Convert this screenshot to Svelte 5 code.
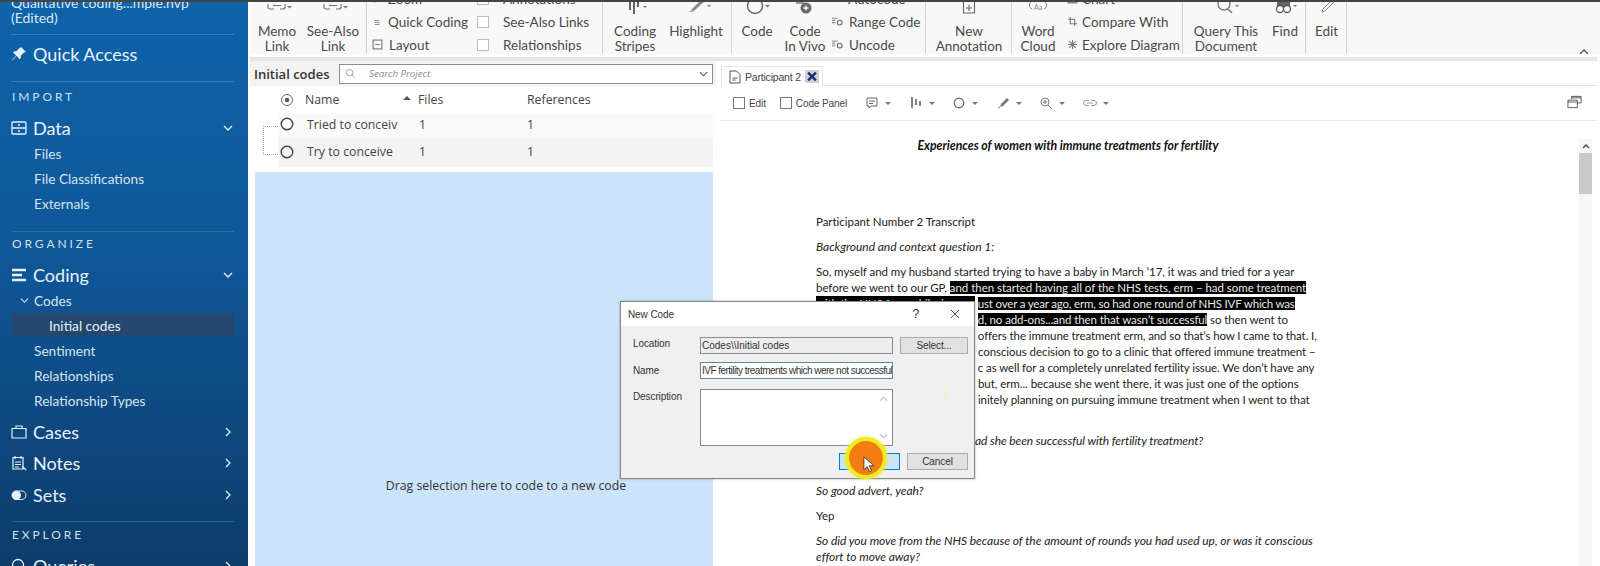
<script>
    const docLines = [
        { plain: "So, myself and my husband started trying to have a baby in March ’17, it was and tried for a year" },
        { plain: "before we went to our GP, ", mark: "and then started having all of the NHS tests, erm – had some treatment" },
        { hidden: "with the NHS for a while, j", mark: "ust over a year ago, erm, so had one round of NHS IVF which was", hiddenMark: true, ls: -0.18 },
        { hidden: "NHS IVF which was funde", mark: "d, no add-ons...and then that wasn’t successful", hiddenMark: true, plain: " so then went to", ls: -0.1 },
        { hidden: "a private clinic that", plain: "offers the immune treatment erm, and so that’s how I came to that. I,", ls: -0.1 },
        { hidden: "didn’t make a", plain: " conscious decision to go to a clinic that offered immune treatment –", ls: -0.07 },
        { hidden: "my friend was at the clini", plain: "c as well for a completely unrelated fertility issue. We don’t have any", ls: -0.1 },
        { hidden: "history of this", plain: " but, erm... because she went there, it was just one of the options", ls: -0.05 },
        { hidden: "that she had and I was def", plain: "initely planning on pursuing immune treatment when I went to that", ls: -0.08 }
    ];
</script>

<div class="app">
    <div class="topline"></div>
    <div class="shell">
        <nav class="sidebar">
            <div class="project">Qualitative coding...mple.nvp<br />(Edited)</div>
            <div class="quick">
                <svg class="nav-icon" viewBox="0 0 16 16"><path d="M10 1l5 5-2 .6-3 3-.4 2.600-1.200 1L5.500 9.800 1.500 14.500 1 14l4.200-4.500L2 6.600l1-1.200 2.600-.4 3-3z" fill="#e6f0f8" /></svg>
                Quick Access
            </div>
            <div class="label first">IMPORT</div>
            <div class="main-row tight">
                <svg class="nav-icon" viewBox="0 0 16 16"><rect x="1" y="2" width="14" height="12" rx="1" fill="none" stroke="#e6f0f8" stroke-width="1.300" /><path d="M1 8h14M7 5h2M7 11h2" stroke="#e6f0f8" stroke-width="1.300" /></svg>
                Data
                <svg class="chev" viewBox="0 0 10 10"><path d="M1 3l4 4 4-4" fill="none" stroke="#e6f0f8" stroke-width="1.300" /></svg>
            </div>
            <div class="sub">Files</div>
            <div class="sub">File Classifications</div>
            <div class="sub last">Externals</div>
            <div class="label">ORGANIZE</div>
            <div class="main-row tight">
                <svg class="nav-icon" viewBox="0 0 16 16"><path d="M1 3h14M1 8h10M1 13h14" stroke="#e6f0f8" stroke-width="2.400" /></svg>
                Coding
                <svg class="chev" viewBox="0 0 10 10"><path d="M1 3l4 4 4-4" fill="none" stroke="#e6f0f8" stroke-width="1.300" /></svg>
            </div>
            <div class="sub codes">
                <svg class="sub-chev" viewBox="0 0 10 10"><path d="M1 3l4 4 4-4" fill="none" stroke="#dbe8f2" stroke-width="1.200" /></svg>
                Codes
            </div>
            <div class="sub active"><span>Initial codes</span></div>
            <div class="sub">Sentiment</div>
            <div class="sub">Relationships</div>
            <div class="sub">Relationship Types</div>
            <div class="main-row first-closed">
                <svg class="nav-icon" viewBox="0 0 16 16"><path d="M1 4.500h14v9.500H1zM5 4.500V2h6v2.500" fill="none" stroke="#e6f0f8" stroke-width="1.200" /></svg>
                Cases
                <svg class="chev" viewBox="0 0 10 10"><path d="M3 1l4 4-4 4" fill="none" stroke="#e6f0f8" stroke-width="1.300" /></svg>
            </div>
            <div class="main-row">
                <svg class="nav-icon" viewBox="0 0 16 16"><path d="M2 2.500h10V14H2zM4 1v3M10 1v3M4 7h6M4 9.500h6M4 12h4M11 11l4 4" fill="none" stroke="#e6f0f8" stroke-width="1.200" /></svg>
                Notes
                <svg class="chev" viewBox="0 0 10 10"><path d="M3 1l4 4-4 4" fill="none" stroke="#e6f0f8" stroke-width="1.300" /></svg>
            </div>
            <div class="main-row">
                <svg class="nav-icon" viewBox="0 0 16 16"><rect x="1" y="4" width="14" height="8.500" rx="4.250" fill="none" stroke="#e6f0f8" stroke-width="1" /><circle cx="5.500" cy="8.250" r="4.500" fill="#e6f0f8" /></svg>
                Sets
                <svg class="chev" viewBox="0 0 10 10"><path d="M3 1l4 4-4 4" fill="none" stroke="#e6f0f8" stroke-width="1.300" /></svg>
            </div>
            <div class="label explore">EXPLORE</div>
            <div class="main-row">
                <svg class="nav-icon" viewBox="0 0 16 16"><circle cx="7" cy="7" r="5.500" fill="none" stroke="#e6f0f8" stroke-width="1.300" /></svg>
                Queries
                <svg class="chev" viewBox="0 0 10 10"><path d="M3 1l4 4-4 4" fill="none" stroke="#e6f0f8" stroke-width="1.300" /></svg>
            </div>
        </nav>

        <div class="content">
            <div class="ribbon">
                <div class="group g117">
                    <div class="big w54">
                        <svg class="top-icon" viewBox="0 0 30 21"><path d="M6 2v3a2 2 0 0 0 2 2h4M18 7h3a2 2 0 0 0 2-2V2M11 3.500h8" fill="none" stroke="#777" stroke-width="1.200" /><path d="M25 4h5l-2.500 2.500z" fill="#777" /></svg>
                        <span>Memo<br />Link</span>
                    </div>
                    <div class="big w58">
                        <svg class="top-icon" viewBox="0 0 30 21"><path d="M6 2v3a2 2 0 0 0 2 2h4M18 7h3a2 2 0 0 0 2-2V2M11 3.500h8" fill="none" stroke="#777" stroke-width="1.200" /><path d="M25 4h5l-2.500 2.500z" fill="#777" /></svg>
                        <span>See-Also<br />Link</span>
                    </div>
                </div>
                <div class="group g236">
                    <div class="col c110">
                        <div class="small"><i class="glyph">⌕</i>Zoom</div>
                        <div class="small"><i class="glyph">≡</i>Quick Coding</div>
                        <div class="small"><svg class="mini" viewBox="0 0 10 10"><rect x="1" y="1" width="8" height="8" fill="none" stroke="#777" /><path d="M3 5h4" stroke="#777" /></svg>Layout</div>
                    </div>
                    <div class="col">
                        <div class="small chk"><b class="box"></b>Annotations</div>
                        <div class="small chk"><b class="box"></b>See-Also Links</div>
                        <div class="small chk"><b class="box"></b>Relationships</div>
                    </div>
                </div>
                <div class="group g129">
                    <div class="big w64">
                        <svg class="top-icon" viewBox="0 0 30 21"><path d="M10 0v8M14 0v12M18 0v5" stroke="#666" stroke-width="2" /><path d="M23 4h4l-2 2z" fill="#777" /></svg>
                        <span>Coding<br />Stripes</span>
                    </div>
                    <div class="big w58">
                        <svg class="top-icon" viewBox="0 0 30 21"><path d="M21 -3l-9 9-2 2 3 1 2-2 9-8z" fill="#888" /><path d="M8 10l3-2 2 2z" fill="#aaa" /><path d="M26 3h4l-2 2z" fill="#777" /></svg>
                        <span>Highlight</span>
                    </div>
                </div>
                <div class="group g194">
                    <div class="big w50">
                        <svg class="top-icon" viewBox="0 0 30 21"><circle cx="13" cy="4" r="7.500" fill="none" stroke="#666" stroke-width="1.500" /><path d="M23 3h5l-2.500 2.500z" fill="#777" /></svg>
                        <span>Code</span>
                    </div>
                    <div class="big w46">
                        <svg class="top-icon" viewBox="0 0 30 21"><path d="M6 1h8" stroke="#999" stroke-width="2" /><circle cx="16" cy="6" r="5.500" fill="#6a6a6a" /><path d="M16 3.500v5M13.500 6h5" stroke="#fff" stroke-width="1.300" /></svg>
                        <span>Code<br />In Vivo</span>
                    </div>
                    <div class="col">
                        <div class="small"><i class="glyph">▫</i>Autocode</div>
                        <div class="small"><svg class="mini" viewBox="0 0 10 10"><path d="M0 2h5M0 4h3M0 6h3" stroke="#888" /><circle cx="7" cy="6" r="2.200" fill="none" stroke="#666" /></svg>Range Code</div>
                        <div class="small"><svg class="mini" viewBox="0 0 10 10"><path d="M0 2h5M0 4h3M0 6h3" stroke="#aaa" stroke-width="1.500" /><circle cx="7" cy="6" r="2.200" fill="none" stroke="#666" /></svg>Uncode</div>
                    </div>
                </div>
                <div class="group g86">
                    <div class="big w86">
                        <svg class="top-icon" viewBox="0 0 30 21"><path d="M9.500 0v11h11V0" fill="none" stroke="#666" stroke-width="1.100" /><path d="M15 3v6M12 6h6" stroke="#666" stroke-width="1.100" /></svg>
                        <span>New<br />Annotation</span>
                    </div>
                </div>
                <div class="group g171">
                    <div class="big w52">
                        <svg class="top-icon" viewBox="0 0 30 21"><path d="M8 0a4 4 0 0 0 1 7M22 0a4 4 0 0 1-1 7" fill="none" stroke="#888" /><text x="11" y="8" class="aa">Aa</text></svg>
                        <span>Word<br />Cloud</span>
                    </div>
                    <div class="col compare">
                        <div class="small"><svg class="mini" viewBox="0 0 10 10"><path d="M1 1h8v8H1z" fill="none" stroke="#777" /></svg>Chart</div>
                        <div class="small"><svg class="mini" viewBox="0 0 10 10"><path d="M3 1v6h6M1 3h6v6" fill="none" stroke="#777" /></svg>Compare With</div>
                        <div class="small"><svg class="mini" viewBox="0 0 10 10"><path d="M5 1v8M2 2l6 6M8 2L2 8M1 5h8" stroke="#777" /></svg>Explore Diagram</div>
                    </div>
                </div>
                <div class="group g123">
                    <div class="big w86">
                        <svg class="top-icon" viewBox="0 0 30 21"><circle cx="13" cy="2" r="6" fill="none" stroke="#777" stroke-width="1.300" /><path d="M17 7l4 4" stroke="#777" stroke-width="1.500" /><path d="M24 3h4l-2 2z" fill="#777" /></svg>
                        <span>Query This<br />Document</span>
                    </div>
                    <div class="big w32">
                        <svg class="top-icon wide" viewBox="0 0 30 21"><path d="M7 0h13v5H7z" fill="#666" /><circle cx="10" cy="7" r="3.500" fill="#fff" stroke="#555" stroke-width="1.300" /><circle cx="17" cy="7" r="3.500" fill="#fff" stroke="#555" stroke-width="1.300" /><path d="M23 3h4l-2 2z" fill="#777" /></svg>
                        <span>Find</span>
                    </div>
                </div>
                <div class="group g41">
                    <div class="big w41">
                        <svg class="top-icon" viewBox="0 0 30 21"><path d="M21 -3l2 2-10 10-3 1 1-3z" fill="none" stroke="#888" /></svg>
                        <span>Edit</span>
                    </div>
                </div>
                <svg class="collapse" viewBox="0 0 10 6"><path d="M1 5l4-4 4 4" fill="none" stroke="#555" stroke-width="1.300" /></svg>
            </div>
            <div class="band"></div>

            <div class="panes">
                <section class="left">
                    <header class="left-head">
                        <strong>Initial codes</strong>
                        <div class="search">
                            <svg class="search-icon" viewBox="0 0 12 12"><circle cx="5" cy="5" r="3.500" fill="none" stroke="#999" /><path d="M7.500 7.500l3 3" stroke="#999" /></svg>
                            <em>Search Project</em>
                            <svg class="search-chev" viewBox="0 0 10 6"><path d="M1 1l4 4 4-4" fill="none" stroke="#555" stroke-width="1.200" /></svg>
                        </div>
                    </header>
                    <div class="list-head">
                        <svg class="radio" viewBox="0 0 14 14"><circle cx="7" cy="7" r="5.500" fill="none" stroke="#666" /><circle cx="7" cy="7" r="2.300" fill="#555" /></svg>
                        <span class="name">Name</span>
                        <i class="sort"></i>
                        <span class="files">Files</span>
                        <span class="refs">References</span>
                    </div>
                    <div class="tree">
                        <div class="tree-line"></div>
                        <div class="row">
                            <svg class="radio" viewBox="0 0 14 14"><circle cx="7" cy="7" r="5.800" fill="none" stroke="#444" stroke-width="1.400" /></svg>
                            <span class="name">Tried to conceiv</span>
                            <span class="files">1</span>
                            <span class="refs">1</span>
                        </div>
                        <div class="row alt">
                            <svg class="radio" viewBox="0 0 14 14"><circle cx="7" cy="7" r="5.800" fill="none" stroke="#444" stroke-width="1.400" /></svg>
                            <span class="name">Try to conceive</span>
                            <span class="files">1</span>
                            <span class="refs">1</span>
                        </div>
                    </div>
                    <div class="drop">Drag selection here to code to a new code</div>
                </section>

                <section class="right">
                    <div class="tabs">
                        <div class="tab">
                            <svg class="tab-icon" viewBox="0 0 12 14"><path d="M1 1h6.500L11 4.500V13H1zM3.500 8h5M3.500 10h3" fill="none" stroke="#555" /></svg>
                            <span class="tab-name">Participant 2</span>
                            <span class="tab-x"><svg viewBox="0 0 10 10"><path d="M2 2l6 6M8 2l-6 6" stroke="#1b2f6b" stroke-width="1.800" /></svg></span>
                        </div>
                    </div>
                    <div class="toolbar">
                        <b class="box tool-box"></b><span class="tool-label">Edit</span>
                        <b class="box tool-box second"></b><span class="tool-label">Code Panel</span>
                        <div class="tools">
                            <div class="tool"><svg viewBox="0 0 14 14"><path d="M2 2h10v8H6l-2 2v-2H2zM4 5h6M4 7.500h4" fill="none" stroke="#666" /></svg><i></i></div>
                            <div class="tool"><svg viewBox="0 0 14 14"><path d="M3 1v11M7 3v6M11 5v5" stroke="#666" stroke-width="1.600" /></svg><i></i></div>
                            <div class="tool"><svg viewBox="0 0 14 14"><circle cx="7" cy="7" r="4.800" fill="none" stroke="#666" stroke-width="1.200" /></svg><i></i></div>
                            <div class="tool"><svg viewBox="0 0 14 14"><path d="M11 2l2 2-6 6-3 1 1-3z" fill="#777" /><path d="M2 12l2-1" stroke="#777" /></svg><i></i></div>
                            <div class="tool"><svg viewBox="0 0 14 14"><circle cx="6" cy="6" r="4" fill="none" stroke="#777" /><path d="M9 9l4 4M4 6h4M6 4v4" stroke="#777" /></svg><i></i></div>
                            <div class="tool faint"><svg viewBox="0 0 14 14"><path d="M6 4.500H3a2.500 2.500 0 0 0 0 5h3M8 4.500h3a2.500 2.500 0 0 1 0 5H8M4 7h6" fill="none" stroke="#999" /></svg><i></i></div>
                        </div>
                        <svg class="restore" viewBox="0 0 16 14"><path d="M5 4V1h10v7h-4M1 5h10v8H1zM1 7h10M5 2.500h10" fill="none" stroke="#555" /></svg>
                    </div>
                    <div class="doc">
                        <div class="page">
                            <h1>Experiences of women with immune treatments for fertility</h1>
                            <p class="transcript">Participant Number 2 Transcript</p>
                            <p><em>Background and context question 1:</em></p>
                            <p class="answer">
                                {#each docLines as line}
                                    <span class="line" style="letter-spacing: {line.ls ?? -0.04}px">
                                        {#if line.hidden}<span class="behind" class:black={line.hiddenMark}>{line.hidden}</span>{/if}
                                        {#if line.mark}
                                            {#if line.plain && !line.hidden}{line.plain}{/if}<mark>{line.mark}</mark>{#if line.plain && line.hidden}{line.plain}{/if}
                                        {:else}
                                            {line.plain}
                                        {/if}
                                    </span>
                                {/each}
                            </p>
                            <p class="question"><em><span class="behind">Did you know, h</span>ad she been successful with fertility treatment?</em></p>
                            <p>Yes</p>
                            <p><em>So good advert, yeah?</em></p>
                            <p>Yep</p>
                            <p><em>So did you move from the NHS because of the amount of rounds you had used up, or was it conscious<br />effort to move away?</em></p>
                        </div>
                        <div class="scroll">
                            <svg viewBox="0 0 10 6"><path d="M2 5l3-3 3 3" fill="none" stroke="#444" stroke-width="1.300" /></svg>
                            <div class="thumb"></div>
                        </div>
                    </div>
                </section>
            </div>
        </div>
    </div>

    <div class="dialog">
        <div class="dialog-title">
            <span>New Code</span>
            <span class="help">?</span>
            <svg class="close" viewBox="0 0 12 12"><path d="M1 1l10 10M11 1L1 11" stroke="#333" stroke-width="1" /></svg>
        </div>
        <div class="dialog-body">
            <div class="form-row loc-row">
                <label for="loc">Location</label>
                <input id="loc" class="field readonly" value={"Codes\\\\Initial codes"} readonly />
                <button class="btn select">Select...</button>
            </div>
            <div class="form-row">
                <label for="nm">Name</label>
                <input id="nm" class="field active-field" value="IVF fertility treatments which were not successful" />
            </div>
            <div class="form-row top">
                <label for="desc">Description</label>
                <div class="area" id="desc">
                    <svg class="area-up" viewBox="0 0 10 6"><path d="M1 5l4-4 4 4" fill="none" stroke="#bbb" stroke-width="1.200" /></svg>
                    <svg class="area-down" viewBox="0 0 10 6"><path d="M1 1l4 4 4-4" fill="none" stroke="#bbb" stroke-width="1.200" /></svg>
                </div>
            </div>
            <div class="dialog-actions">
                <button class="btn ok">OK</button>
                <button class="btn">Cancel</button>
            </div>
        </div>
        <i class="speck"></i>
    </div>

    <div class="pointer">
        <svg viewBox="0 0 14 20"><path d="M1 1v15l4-3.500 2.500 6 2.500-1-2.500-6H13z" fill="#fff" stroke="#333" stroke-width="1" /></svg>
    </div>
</div>

<style>
    :global(body) {
        margin: 0;
        background: #fff;
    }

    .app {
        position: relative;
        height: 566px;
        overflow: hidden;
        font-family: Lato, sans-serif;
        color: #444;
    }

    .topline {
        height: 2px;
        background: #444;
    }

    .shell {
        display: flex;
        height: 564px;
    }

    /* sidebar */
    .sidebar {
        flex: 0 0 248px;
        box-sizing: border-box;
        overflow: hidden;
        background: linear-gradient(#0e63aa, #0f5797 45%, #0d3c6b);
        color: #eaf2f9;
    }

    .project {
        margin: -7px 14px 0 11px;
        padding-bottom: 9px;
        font-size: 14px;
        line-height: 15px;
        color: #dbe8f3;
        border-bottom: 1px solid #2f7dbd;
    }

    .quick {
        box-sizing: border-box;
        display: flex;
        align-items: center;
        gap: 6px;
        height: 47px;
        margin: 0 14px 0 11px;
        padding-bottom: 8px;
        font-size: 18px;
        border-bottom: 1px solid #2f7dbd;
    }

    .label {
        margin-left: 12px;
        padding: 7px 0 10px;
        font-size: 12px;
        line-height: 16px;
        letter-spacing: 2.900px;
        color: #cfe0ee;
    }

    .label:not(.first) {
        margin: 0 14px 0 12px;
        padding: 4px 0 10px;
        border-top: 1px solid #2b6fa8;
    }

    .label.explore {
        margin-top: 10px;
        padding: 5px 0 8px;
        border-color: #2a5f90;
    }

    .main-row {
        display: flex;
        align-items: center;
        gap: 6px;
        height: 31.500px;
        padding: 0 15px 0 11px;
        font-size: 18px;
    }

    .main-row.tight {
        height: 26px;
    }

    .main-row.first-closed {
        margin-top: 3px;
    }

    .nav-icon {
        flex: none;
        width: 16px;
        height: 16px;
    }

    .chev {
        width: 10px;
        height: 10px;
        margin-left: auto;
    }

    .sub {
        position: relative;
        height: 25px;
        padding-left: 34px;
        font-size: 13.700px;
        line-height: 25px;
        color: #d6e4ef;
    }

    .sub.last {
        margin-bottom: 15px;
    }

    .sub-chev {
        position: absolute;
        left: 20px;
        top: 8px;
        width: 9px;
        height: 9px;
    }

    .sub.active {
        padding-left: 0;
    }

    .sub.active span {
        display: block;
        margin: 0 14px 2px 12px;
        height: 23px;
        padding-left: 37px;
        line-height: 25px;
        background: #24476f;
        color: #e6eff6;
    }

    /* ribbon */
    .content {
        flex: 1;
        min-width: 0;
        margin-left: 2px;
        display: flex;
        flex-direction: column;
    }

    .ribbon {
        position: relative;
        display: flex;
        flex: none;
        height: 52px;
        overflow: hidden;
        background: #f8f8f8;
        font-size: 13.500px;
        color: #4a4a4a;
    }

    .group {
        flex: none;
        box-sizing: border-box;
        display: flex;
        border-right: 1px solid #d4d4d4;
    }

    .g117 { width: 117px; }
    .g236 { width: 236px; }
    .g129 { width: 129px; }
    .g194 { width: 194px; }
    .g86 { width: 86px; }
    .g171 { width: 171px; }
    .g123 { width: 123px; }
    .g41 { width: 41px; }

    .w32 { width: 32px; }
    .w41 { width: 41px; }
    .w46 { width: 46px; }
    .w50 { width: 50px; }
    .w52 { width: 52px; }
    .w54 { width: 54px; }
    .w58 { width: 58px; }
    .w64 { width: 64px; }
    .w86 { width: 86px; }

    .big {
        flex: none;
        display: flex;
        flex-direction: column;
        align-items: center;
        text-align: center;
        line-height: 15px;
        white-space: nowrap;
    }

    .big span {
        margin-top: 1px;
    }

    .top-icon {
        display: block;
        width: 30px;
        height: 21px;
        flex: none;
    }

    .col {
        flex: none;
        margin-top: -15px;
    }

    .c110 {
        width: 110px;
    }

    .compare {
        margin-left: -1px;
    }

    .compare .mini {
        margin-right: 4px;
    }

    .small {
        display: flex;
        align-items: center;
        height: 23px;
        padding-left: 3px;
        white-space: nowrap;
    }

    .g236 .small:not(.chk) {
        padding-left: 4px;
    }

    .small.chk {
        padding-left: 0;
    }

    .glyph {
        width: 12px;
        margin-right: 5px;
        text-align: center;
        font-size: 11px;
        font-style: normal;
        color: #777;
    }

    .mini {
        width: 11px;
        height: 11px;
        margin: 0 6px 0 1px;
        flex: none;
    }

    .box {
        flex: none;
        box-sizing: border-box;
        display: block;
        width: 12px;
        height: 12px;
        background: #fff;
        border: 1px solid #bdbdbd;
    }

    .chk .box {
        margin-right: 14px;
    }

    .collapse {
        position: absolute;
        top: 47px;
        left: 1329px;
        width: 10px;
        height: 6px;
    }

    .band {
        flex: none;
        height: 4px;
        margin: 3px 3px 0 0;
        background: #e6e6e6;
    }

    .panes {
        flex: 1;
        min-height: 0;
        display: flex;
    }

    /* codes pane */
    .left {
        flex: 0 0 466px;
        display: flex;
        flex-direction: column;
    }

    .left-head {
        display: flex;
        align-items: center;
        flex: none;
        height: 25px;
        padding: 0 3px 0 4px;
        background: #f3f3f3;
    }

    .left-head strong {
        flex: none;
        width: 85px;
        font-family: "Open Sans", sans-serif;
        font-size: 13px;
        font-weight: 600;
        color: #333;
    }

    .search {
        position: relative;
        flex: 1;
        box-sizing: border-box;
        display: flex;
        align-items: center;
        height: 20px;
        background: #fff;
        border: 1px solid #8d8d8d;
        font-family: "Open Sans", sans-serif;
        font-size: 9.700px;
        color: #888;
    }

    .search-icon {
        width: 11px;
        height: 11px;
        margin: 0 13px 0 5px;
    }

    .search-chev {
        position: absolute;
        right: 4px;
        top: 6px;
        width: 9px;
        height: 6px;
    }

    .list-head,
    .row {
        position: relative;
        display: flex;
        align-items: center;
        box-sizing: border-box;
        font-family: "Open Sans", sans-serif;
        font-size: 12.300px;
        color: #444;
    }

    .list-head {
        height: 27px;
    }

    .radio {
        position: absolute;
        left: 30px;
        top: calc(50% - 7px);
        width: 14px;
        height: 14px;
    }

    .name,
    .files,
    .refs {
        position: absolute;
        white-space: nowrap;
    }

    .list-head .name { left: 55px; }
    .list-head .files { left: 168px; }
    .list-head .refs { left: 277px; }

    .sort {
        position: absolute;
        left: 153px;
        top: 10px;
        border: 4px solid transparent;
        border-top: 0;
        border-bottom: 4px solid #555;
    }

    .tree {
        position: relative;
        flex: none;
        height: 54px;
    }

    .tree-line {
        position: absolute;
        left: 13px;
        top: 13px;
        width: 16px;
        height: 27px;
        border: 1px dotted #aaa;
        border-right: 0;
    }

    .row {
        height: 25px;
        margin: 0 3px 0 28px;
        padding-bottom: 3px;
        background: #fafafa;
    }

    .row.alt {
        height: 29px;
        padding-bottom: 2px;
        background: #f4f4f4;
    }

    .row .radio {
        left: 2px;
        top: 4px;
    }

    .row.alt .radio {
        top: 7px;
    }

    .row .name { left: 29px; }
    .row .files { left: 141px; }
    .row .refs { left: 249px; }

    .drop {
        flex: 1;
        display: flex;
        align-items: center;
        justify-content: center;
        margin: 5px 3px 0 5px;
        padding: 232px 0 0 44px;
        background: #cce4fa;
        font-family: "Open Sans", sans-serif;
        font-size: 12.300px;
        color: #333;
    }

    /* document pane */
    .right {
        flex: 1;
        min-width: 0;
        margin: 0 3px 0 4px;
        display: flex;
        flex-direction: column;
    }

    .tabs {
        flex: none;
        height: 25px;
        box-sizing: border-box;
        padding-top: 5px;
        padding-left: 1px;
        border-bottom: 1px solid #e2e2e2;
    }

    .tab {
        box-sizing: border-box;
        display: flex;
        align-items: center;
        width: 102px;
        height: 20px;
        padding-left: 7px;
        border: 1px solid #e6e6e6;
        border-bottom: 0;
        font-family: "Liberation Sans", sans-serif;
        font-size: 10.500px;
        letter-spacing: -0.200px;
        color: #444;
        background: #fff;
    }

    .tab-name {
        flex: none;
        width: 60px;
        white-space: nowrap;
    }

    .tab-icon {
        flex: none;
        width: 12px;
        height: 14px;
        margin-right: 4px;
    }

    .tab-x {
        flex: none;
        display: block;
        width: 14px;
        height: 13px;
        background: #cdd0d5;
    }

    .tab-x svg {
        display: block;
        width: 14px;
        height: 13px;
    }

    .toolbar {
        position: relative;
        flex: none;
        display: flex;
        align-items: center;
        height: 35px;
        box-sizing: border-box;
        padding-left: 13px;
        border-bottom: 1px solid #e6e6e6;
        font-family: "Liberation Sans", sans-serif;
        font-size: 10px;
        letter-spacing: -0.100px;
        color: #444;
    }

    .tool-box {
        border-color: #777;
        margin-right: 4px;
    }

    .tool-box.second {
        margin-left: 14px;
    }

    .tools {
        display: flex;
        margin-left: 18px;
    }

    .tool {
        display: flex;
        align-items: center;
        gap: 6px;
        width: 43.500px;
    }

    .tool svg {
        width: 14px;
        height: 14px;
    }

    .tool i {
        border: 3px solid transparent;
        border-top: 3px solid #777;
        border-bottom: 0;
    }

    .restore {
        position: absolute;
        left: 847px;
        top: 9px;
        width: 15px;
        height: 14px;
    }

    .doc {
        position: relative;
        flex: 1;
        min-height: 0;
        overflow: hidden;
    }

    .page {
        width: 504px;
        margin-left: 96px;
        padding-top: 17px;
        font-family: Lato, sans-serif;
        font-size: 11.500px;
        line-height: 16px;
        letter-spacing: -0.040px;
        white-space: nowrap;
        color: #222;
    }

    .page h1 {
        margin: 0 0 60px;
        font-size: 12.300px;
        line-height: 16px;
        font-weight: 700;
        font-style: italic;
        text-align: center;
        color: #111;
    }

    .page p {
        margin: 0 0 9px;
    }

    .page em {
        font-size: 12px;
    }

    .line {
        display: block;
    }

    .line mark {
        background: #000;
        color: #e8e8e8;
    }

    .behind {
        display: inline-block;
        vertical-align: top;
        width: 159px;
        height: 16px;
        overflow: hidden;
    }

    .behind.black {
        background: #000;
        color: #e8e8e8;
    }

    .page p.question {
        margin-top: 25px;
        letter-spacing: -0.100px;
    }

    .scroll {
        position: absolute;
        top: 18px;
        left: 859px;
        width: 13px;
        height: 500px;
        background: #f6f6f6;
    }

    .scroll svg {
        display: block;
        width: 10px;
        height: 8px;
        margin: 3px auto;
    }

    .thumb {
        height: 41px;
        background: #c9c9c9;
    }

    /* new code dialog */
    .dialog {
        position: absolute;
        left: 620px;
        top: 301px;
        box-sizing: border-box;
        width: 355px;
        height: 178px;
        border: 1px solid #888;
        background: #f0f0f0;
        font-family: "Liberation Sans", sans-serif;
        font-size: 10px;
        letter-spacing: -0.100px;
        color: #333;
        box-shadow: 0 0 2px rgba(0, 0, 0, 0.35);
    }

    .dialog-title {
        display: flex;
        align-items: center;
        height: 24px;
        padding: 0 14px 0 7px;
        background: #fff;
    }

    .help {
        margin-left: auto;
        margin-right: 31px;
        font-size: 12px;
    }

    .close {
        width: 10px;
        height: 10px;
    }

    .dialog-body {
        padding: 11px 6px 0 12px;
    }

    .form-row {
        display: flex;
        align-items: center;
        margin-bottom: 8px;
    }

    .form-row.top {
        align-items: flex-start;
        margin-top: 10px;
        margin-bottom: 7px;
    }

    .form-row label {
        flex: none;
        width: 67px;
    }

    .form-row.loc-row label {
        margin-top: -4px;
    }

    .form-row.top label {
        margin-top: 2px;
    }

    .field {
        flex: none;
        box-sizing: border-box;
        width: 193px;
        height: 17px;
        padding: 0 0 0 1px;
        font: inherit;
        color: #333;
        outline: none;
    }

    .readonly {
        background: #eee;
        border: 1px solid #8a8a8a;
    }

    .active-field {
        background: #fff;
        border: 1px solid #5f87ad;
        letter-spacing: -0.520px;
    }

    .btn {
        box-sizing: border-box;
        width: 61px;
        height: 17px;
        padding: 0;
        border: 1px solid #adadad;
        background: #e1e1e1;
        font: inherit;
        letter-spacing: inherit;
        color: #333;
    }

    .btn.select {
        width: 69px;
        margin-left: 7px;
    }

    .area {
        position: relative;
        box-sizing: border-box;
        width: 193px;
        height: 57px;
        background: #fff;
        border: 1px solid #8a8a8a;
    }

    .area-up,
    .area-down {
        position: absolute;
        right: 4px;
        width: 9px;
        height: 6px;
    }

    .area-up { top: 6px; }
    .area-down { bottom: 6px; }

    .dialog-actions {
        display: flex;
        justify-content: flex-end;
        gap: 7px;
    }

    .btn.ok {
        background: #cce4f7;
        border-color: #0078d7;
    }

    .speck {
        position: absolute;
        left: 324px;
        top: 88px;
        width: 1px;
        height: 9px;
        background: #f2f2a0;
    }

    .pointer {
        position: absolute;
        left: 849px;
        top: 441px;
        width: 34px;
        height: 34px;
        border-radius: 50%;
        background: #f57c13;
        box-shadow: 0 0 0 4px #ecec1e, 0 0 3px 5px rgba(240, 240, 60, 0.5);
    }

    .pointer svg {
        position: absolute;
        left: 14px;
        top: 15px;
        width: 12px;
        height: 17px;
    }

    .aa {
        font-size: 7px;
        fill: #888;
    }
</style>
